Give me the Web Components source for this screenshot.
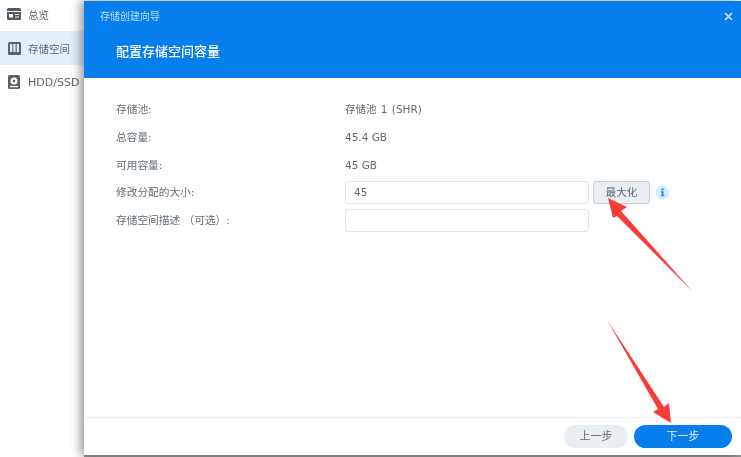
<!DOCTYPE html>
<html lang="zh"><head><meta charset="utf-8"><title>存储创建向导</title>
<style>
html,body{margin:0;padding:0;width:741px;height:457px;overflow:hidden;background:#fff}
body{font:11px "DejaVu Sans","Noto Sans CJK SC",sans-serif;color:#5e6a73}
</style></head><body>
<nas-app>
  <nas-sidebar slot="side">
    <nas-nav-item first label="总览"><svg viewBox="0 0 14 12" width="14" height="12"><rect width="14" height="12" rx="1.5" fill="#4f5963"/><rect x="0" y="3" width="14" height="1" fill="#fff"/><rect x="2" y="6" width="4" height="3.5" fill="#fff"/><rect x="8" y="6" width="4" height="1" fill="#fff"/><rect x="8" y="8.500" width="4" height="1" fill="#fff"/></svg></nas-nav-item>
    <nas-nav-item active label="存储空间"><svg viewBox="0 0 13 13" width="13" height="13"><rect width="13" height="13" rx="1.500" fill="#59646e"/><rect x="2" y="2" width="2.300" height="8" fill="#dfe9f3"/><rect x="5.300" y="2" width="2.300" height="8" fill="#dfe9f3"/><rect x="8.700" y="2" width="2.300" height="8" fill="#dfe9f3"/></svg></nas-nav-item>
    <nas-nav-item style="font-size:11px" label="HDD/SSD"><svg viewBox="0 0 12 14" width="12" height="14"><rect width="12" height="14" rx="1.500" fill="#59646e"/><circle cx="6" cy="6" r="3.500" fill="#fff"/><circle cx="6" cy="6" r="1.300" fill="#59646e"/><rect x="2" y="11" width="8" height="1.200" fill="#fff"/></svg></nas-nav-item>
  </nas-sidebar>
  <nas-wizard slot="main" window-title="存储创建向导" heading="配置存储空间容量">
    <nas-row label="存储池:" style="word-spacing:1px">存储池 1 (SHR)</nas-row>
    <nas-row label="总容量:">45.4 GB</nas-row>
    <nas-row label="可用容量:">45 GB</nas-row>
    <nas-row label="修改分配的大小:">
      <nas-field value="45"></nas-field>
      <nas-button>最大化</nas-button>
      <nas-info></nas-info>
    </nas-row>
    <nas-row label="存储空间描述 （可选）:"><nas-field></nas-field></nas-row>
    <nas-pill slot="footer">上一步</nas-pill>
    <nas-pill slot="footer" primary>下一步</nas-pill>
  </nas-wizard>
  <nas-arrows slot="overlay"></nas-arrows>
</nas-app>
<script>
function el(name, html){
  customElements.define(name, class extends HTMLElement{
    constructor(){super();this.attachShadow({mode:'open'});}
    connectedCallback(){
      this.shadowRoot.innerHTML = typeof html==='function'?html(this):html;
    }
  });
}
const esc=s=>String(s||'').replace(/[&<>"]/g,c=>({'&':'&amp;','<':'&lt;','>':'&gt;','"':'&quot;'}[c]));
el('nas-app',`<style>
:host{display:grid;grid-template-columns:84px 1fr;width:741px;height:457px;position:relative;overflow:hidden;background:#fff;filter:blur(.35px)}
</style><slot name="side"></slot><slot name="main"></slot><slot name="overlay"></slot>`);
el('nas-sidebar',`<style>:host{display:flex;flex-direction:column;background:#fff}</style><slot></slot>`);
el('nas-nav-item',h=>`<style>
:host{display:flex;align-items:center;height:34px;color:#5b6670;font-size:10.500px;white-space:nowrap}
:host([first]){height:28px;margin-bottom:3px}
:host([active]){background:#e3f0fc}
.i{width:14px;margin-left:7px;margin-right:7px;display:flex;justify-content:center}
svg,::slotted(svg){display:block}
</style><span class="i"><slot></slot></span><span>${esc(h.getAttribute('label'))}</span>`);
el('nas-wizard',h=>`<style>
:host{display:flex;flex-direction:column;height:454px;margin-top:1px;background:#fff;box-shadow:-3px 0 10px rgba(0,0,0,.45),0 2px 0 #9a9a9a;position:relative;z-index:1}
header{height:77px;background:#067eed;color:#fff;flex:none;position:relative;box-sizing:border-box;padding:10px 0 0 16px}
.t{font-size:10px;line-height:12px;color:#bfdcfa}
.h{font-size:13px;line-height:18px;margin:20px 0 0 16px;font-weight:500}
.x{position:absolute;right:8px;top:11px;width:9px;height:9px}
main{flex:1;padding:17px 0 0 32px}
footer{height:38px;box-sizing:border-box;border-top:1px solid #ebedf0;display:flex;justify-content:flex-end;align-items:flex-start;gap:6px;padding:7px 9px 0 0}
</style><header><div class="t">${esc(h.getAttribute('window-title'))}</div><div class="h">${esc(h.getAttribute('heading'))}</div>
<svg class="x" viewBox="0 0 9 9"><path d="M1 1l7 7M8 1l-7 7" stroke="#cfe5fc" stroke-width="1.700" fill="none"/></svg></header>
<main><slot></slot></main><footer><slot name="footer"></slot></footer>`);
el('nas-row',h=>`<style>
:host{display:flex;align-items:center;height:28px;color:#5e6a73;font-size:10.500px;white-space:pre}
:host(:nth-of-type(4)){height:27px}
.l{width:229px;flex:none;font-size:10.700px;color:#616c75;padding-bottom:2px}
:host(:nth-of-type(1)) .v{padding-bottom:2px}
.v{display:flex;align-items:center}
</style><span class="l">${esc(h.getAttribute('label'))}</span><span class="v"><slot></slot></span>`);
el('nas-field',h=>`<style>
:host{display:block;width:244px;height:23px;box-sizing:border-box;border:1px solid #dfe4ea;border-radius:3px;padding-left:8px;line-height:21px;font-size:10.500px;color:#5e6a73;background:#fff}
</style>${esc(h.getAttribute('value'))}`);
el('nas-button',`<style>
:host{display:block;width:57px;height:23px;box-sizing:border-box;margin-left:4px;border:1px solid #c5ced8;border-radius:3px;background:#e9eef3;text-align:center;line-height:21px;font-size:10.700px;color:#5b6670}
</style><slot></slot>`);
el('nas-info',`<style>
:host{display:block;width:15px;height:15px;margin-left:5px}
svg{display:block}
</style><svg viewBox="0 0 15 15" width="15" height="15"><circle cx="7.500" cy="7.500" r="7" fill="#d9ebfd"/><rect x="6.500" y="3.500" width="2" height="1.800" fill="#1f7fe0"/><path d="M5.800 6.300h2.700v3.900h1v1.100H5.800v-1.100h1V7.400h-1z" fill="#1f7fe0"/></svg>`);
el('nas-pill',h=>`<style>
:host{display:block;height:23px;border-radius:12px;text-align:center;line-height:23px;font-size:11px;box-sizing:border-box;
 width:${h.hasAttribute('primary')?98:64}px;background:${h.hasAttribute('primary')?'#067eed':'#e9eef3'};color:${h.hasAttribute('primary')?'#e8f3fe':'#616c75'}}
</style><slot></slot>`);
el('nas-arrows',`<style>
:host{display:block;position:absolute;inset:0;pointer-events:none;z-index:5}
svg{display:block}
</style><svg width="741" height="457" viewBox="0 0 741 457">
<path fill="#fb3a3a" d="M608 198L627 207L621 211L693 292L617 216L613 218Z"/>
<path fill="#fb3a3a" d="M671 423L653 412L658 409L607 320L664 407L669 403Z"/>
</svg>`);
</script>
</body></html>
